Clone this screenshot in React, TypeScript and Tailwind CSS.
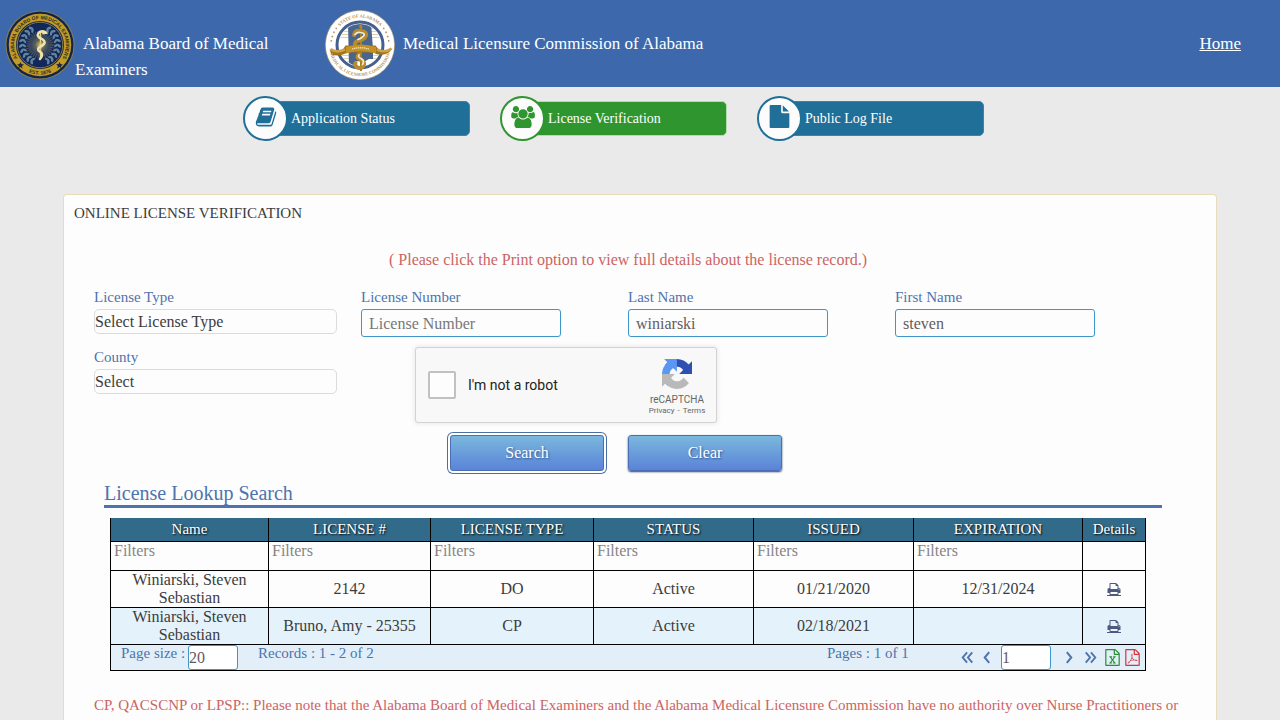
import React, { useState } from "react";

type IconProps = { className?: string };

function BookIcon({ className }: IconProps) {
  return (
    <svg viewBox="0 0 1792 1792" fill="currentColor" aria-hidden="true" className={className}>
      <path d="M1703 478q40 57 18 129l-275 906q-19 64-76.5 107.5t-122.5 43.5h-923q-77 0-148.5-53.5t-99.5-131.5q-24-67-2-127 0-4 3-27t4-37q1-8-3-21.5t-3-19.5q2-11 8-21t16.5-23.5 16.5-23.5q23-38 45-91.5t30-91.5q3-10 .5-30t-.5-28q3-11 17-28t17-23q21-36 42-92t25-90q1-9-2.5-32t.5-28q4-13 22-30.5t22-22.5q19-26 42.5-84.5t27.5-96.5q1-8-3-25.5t-2-26.5q2-8 9-18t18-23 17-21q8-12 16.5-30.5t15-35 16-36 19.5-32 26.5-23.5 36-11.5 47.5 5.5l-1 3q38-9 51-9h761q74 0 114 56t18 130l-274 906q-36 119-71.5 153.5t-128.5 34.5h-869q-27 0-38 15-11 16-1 43 24 70 144 70h923q29 0 56-15.5t35-41.5l300-987q7-22 5-57 38 15 59 43zm-1064 2q-4 13 2 22.5t20 9.5h608q13 0 25.5-9.5t16.5-22.5l21-64q4-13-2-22.5t-20-9.5h-608q-13 0-25.5 9.5t-16.5 22.5zm-83 256q-4 13 2 22.5t20 9.5h608q13 0 25.5-9.5t16.5-22.5l21-64q4-13-2-22.5t-20-9.5h-608q-13 0-25.5 9.5t-16.5 22.5z" />
    </svg>
  );
}

function UsersIcon({ className }: IconProps) {
  return (
    <svg viewBox="-64 0 1920 1792" fill="currentColor" aria-hidden="true" className={className}>
      <path d="M529 896q-162 5-265 128h-134q-82 0-138-40.5t-56-118.5q0-353 124-353 6 0 43.5 21t97.5 42.5 119 21.5q67 0 133-23-5 37-5 66 0 159 93 287zm1071 637q0 120-73 189.5t-194 69.5h-874q-121 0-194-69.5t-73-189.5q0-53 3.5-103.5t14-109 26.5-108.5 43-97.5 62-81 85.5-53.5 111.5-20q10 0 43 21.5t73 48 107 48 135 21.5 135-21.5 107-48 73-48 43-21.5q61 0 111.5 20t85.5 53.5 62 81 43 97.5 26.5 108.5 14 109 3.5 103.5zm-1024-1277q0 106-75 181t-181 75-181-75-75-181 75-181 181-75 181 75 75 181zm704 384q0 159-112.5 271.5t-271.5 112.5-271.5-112.5-112.5-271.5 112.5-271.5 271.5-112.5 271.5 112.5 112.5 271.5zm576 225q0 78-56 118.5t-138 40.5h-134q-103-123-265-128 93-128 93-287 0-29-5-66 66 23 133 23 59 0 119-21.5t97.5-42.5 43.5-21q124 0 124 353zm-128-609q0 106-75 181t-181 75-181-75-75-181 75-181 181-75 181 75 75 181z" />
    </svg>
  );
}

function FileIcon({ className }: IconProps) {
  return (
    <svg viewBox="0 0 1792 1792" fill="currentColor" aria-hidden="true" className={className}>
      <path d="M1152 512v-472q22 14 36 28l408 408q14 14 28 36h-472zm-128 32q0 40 28 68t68 28h544v1056q0 40-28 68t-68 28h-1344q-40 0-68-28t-28-68v-1600q0-40 28-68t68-28h800v544z" />
    </svg>
  );
}

function PrintIcon({ className }: IconProps) {
  return (
    <svg viewBox="64 128 1664 1536" fill="currentColor" aria-hidden="true" className={className}>
      <path d="M448 1536h896v-256h-896v256zm0-640h896v-384h-160q-40 0-68-28t-28-68v-160h-640v640zm1152 64q0-26-19-45t-45-19-45 19-19 45 19 45 45 19 45-19 19-45zm128 0v416q0 13-9.5 22.5t-22.5 9.5h-224v160q0 40-28 68t-68 28h-960q-40 0-68-28t-28-68v-160h-224q-13 0-22.5-9.5t-9.5-22.5v-416q0-79 56.5-135.5t135.5-56.5h64v-544q0-40 28-68t68-28h672q40 0 88 20t76 48l152 152q28 28 48 76t20 88v256h64q79 0 135.5 56.5t56.5 135.5z" />
    </svg>
  );
}

const PAGE_OUTLINE =
  "M1596 380q28 28 48 76t20 88v1152q0 40-28 68t-68 28h-1344q-40 0-68-28t-28-68v-1600q0-40 28-68t68-28h896q40 0 88 20t76 48zm-444-244v376h376q-10-29-22-41l-313-313q-12-12-41-22zm384 1528v-1024h-416q-40 0-68-28t-28-68v-416h-768v1536h1280z";

function ExcelIcon({ className }: IconProps) {
  return (
    <svg viewBox="128 0 1536 1792" fill="currentColor" aria-hidden="true" className={className}>
      <path
        d={
          PAGE_OUTLINE +
          "m-979-234v106h281v-106h-75l103-161q5-7 10-16.5t7.5-13.5 3.5-4h2q1 4 5 10 2 4 4.5 7.5t6 8 6.5 8.5l107 161h-76v106h291v-106h-68l-192-273 195-282h67v-107h-279v107h74l-103 159q-4 7-10 16.5t-9 13.5l-2 3h-2q-1-4-5-10-6-11-17-23l-106-159h76v-107h-290v107h68l189 272-194 283h-68z"
        }
      />
    </svg>
  );
}

function PdfIcon({ className }: IconProps) {
  return (
    <svg viewBox="128 0 1536 1792" fill="currentColor" aria-hidden="true" className={className}>
      <path
        d={
          PAGE_OUTLINE +
          "m-514-593q33 26 84 56 59-7 117-7 147 0 177 49 16 22 2 52 0 1-1 2l-2 2v1q-6 38-71 38-48 0-115-20t-130-53q-221 24-392 83-153 262-242 262-15 0-28-7l-24-12q-1-1-6-5-10-10-6-36 9-40 56-91.5t132-96.5q14-9 23 6 2 2 2 4 52-85 107-197 68-136 104-262-24-82-30.5-159.5t6.5-127.5q11-40 42-40h22q23 0 35 15 18 21 9 68-2 6-4 8 1 3 1 8v30q-2 123-14 192 55 164 146 238zm-576 411q52-24 137-158-51 40-87.5 84t-49.5 74zm398-920q-15 42-2 132 1-7 7-44 0-3 7-43 1-4 4-8-1-1-1-2t-1-2-1-2q-1-22-13-36 0 1-1 2v2zm-124 661q135-54 284-81-2-1-13-9.5t-16-13.5q-76-67-127-176-27 86-83 197-30 56-45 83zm646-16q-24-24-140-24 76 28 124 28 14 0 18-1 0-1-2-3z"
        }
      />
    </svg>
  );
}

function Chevrons({ direction, double }: { direction: "left" | "right"; double?: boolean }) {
  const single = direction === "left" ? "M8 2L3 8L8 14" : "M2 2L7 8L2 14";
  const pair = direction === "left" ? "M7 2L2 8L7 14M13 2L8 8L13 14" : "M2 2L7 8L2 14M8 2L13 8L8 14";
  return (
    <svg
      viewBox={double ? "0 0 15 16" : "0 0 10 16"}
      fill="none"
      stroke="currentColor"
      strokeWidth="2.2"
      aria-hidden="true"
      className={double ? "h-[15px] w-[13px]" : "h-[15px] w-[9px]"}
    >
      <path d={double ? pair : single} />
    </svg>
  );
}

function RecaptchaIcon({ className }: IconProps) {
  return (
    <svg viewBox="0 0 64 64" aria-hidden="true" className={className}>
      <path fill="#2f4fb2" d="M64 31.955l-.033-1.37V4.687l-7.16 7.16C50.948 4.674 42.033.093 32.05.093c-10.4 0-19.622 4.96-25.458 12.64l11.736 11.86a15.55 15.55 0 0 1 4.754-5.334c2.05-1.6 4.952-2.906 8.968-2.906.485 0 .86.057 1.135.163 4.976.393 9.288 3.14 11.828 7.124l-8.307 8.307L64 31.953" />
      <path fill="#5a97f5" d="M31.862.094l-1.37.033H4.594l7.16 7.16C4.58 13.147 0 22.06 0 32.046c0 10.4 4.96 19.622 12.64 25.458L24.5 45.768a15.55 15.55 0 0 1-5.334-4.754c-1.6-2.05-2.906-4.952-2.906-8.968 0-.485.057-.86.163-1.135.393-4.976 3.14-9.288 7.124-11.828l8.307 8.307L31.86.095" />
      <path fill="#b9b9b9" d="M.001 32.045l.033 1.37v25.898l7.16-7.16c5.86 7.173 14.774 11.754 24.76 11.754 10.4 0 19.622-4.96 25.458-12.64l-11.736-11.86a15.55 15.55 0 0 1-4.754 5.334c-2.05 1.6-4.952 2.906-8.968 2.906-.485 0-.86-.057-1.135-.163-4.976-.393-9.288-3.14-11.828-7.124l8.307-8.307c-10.522.04-22.4.066-27.295-.005" />
    </svg>
  );
}

const LAUREL_STEPS = [-62, -46, -30, -14, 2, 18, 34, 50, 64];

function ExaminersSeal({ className }: IconProps) {
  return (
    <svg viewBox="0 0 140 140" role="img" aria-label="Alabama Board of Medical Examiners seal" className={className}>
      <defs>
        <radialGradient id="sealGlow">
          <stop offset="0" stopColor="#e0c25a" />
          <stop offset="0.35" stopColor="#5c6460" />
          <stop offset="1" stopColor="#12275c" />
        </radialGradient>
        <path id="sealTop" d="M34.3 107.8A51.8 51.8 0 1 1 105.7 107.8" />
        <path id="sealBottom" d="M36 118.5A59.3 59.3 0 0 0 104 118.5" />
      </defs>
      <circle cx="70" cy="70" r="69" fill="#857f50" />
      <circle cx="70" cy="70" r="67" fill="#14244a" />
      <circle cx="70" cy="70" r="62.5" fill="#c29a26" />
      <circle cx="70" cy="70" r="48" fill="#14244a" />
      <circle cx="70" cy="70" r="45.5" fill="none" stroke="#a3914c" strokeWidth="1.5" />
      <circle cx="70" cy="70" r="43" fill="#12275c" />
      <circle cx="70" cy="70" r="27" fill="url(#sealGlow)" />
      <circle cx="70" cy="70" r="24" fill="none" stroke="#7d7a55" strokeWidth="9" strokeDasharray="1.5 3" opacity="0.6" />
      {LAUREL_STEPS.map((deg) => (
        <g key={deg} fill="#64869c">
          <ellipse cx="108" cy="70" rx="5" ry="2.6" transform={`rotate(${deg} 70 70) rotate(40 108 70)`} />
          <ellipse cx="102" cy="70" rx="4.5" ry="2.4" transform={`rotate(${deg} 70 70) rotate(-40 102 70)`} />
          <ellipse cx="32" cy="70" rx="5" ry="2.6" transform={`rotate(${-deg} 70 70) rotate(-40 32 70)`} />
          <ellipse cx="38" cy="70" rx="4.5" ry="2.4" transform={`rotate(${-deg} 70 70) rotate(40 38 70)`} />
        </g>
      ))}
      <path d="M71 44V98" stroke="#e2cb7d" strokeWidth="3" />
      <path d="M82 45Q73 40 67 46Q63 53 72 57Q82 62 78 68Q74 72 68 75Q63 80 72 85Q77 90 70 98" fill="none" stroke="#efe3ae" strokeWidth="5" strokeLinecap="round" />
      <path d="M74 42L87 47L75 49Z" fill="#efe3ae" />
      <g fill="#2d2d24" fontFamily="Liberation Sans, sans-serif" fontWeight="700">
        <text fontSize="10" textAnchor="middle">
          <textPath href="#sealTop" startOffset="50%">ALABAMA BOARD OF MEDICAL EXAMINERS</textPath>
        </text>
        <text fontSize="10" textAnchor="middle">
          <textPath href="#sealBottom" startOffset="50%">EST. 1876</textPath>
        </text>
      </g>
      <path d="M31 104l2 4 5 1-4 3 1 5-4-3-5 3 2-5-4-3 5-1zM109 104l2 4 5 1-4 3 1 5-4-3-5 3 2-5-4-3 5-1z" fill="#1d2742" />
    </svg>
  );
}

const DOT_ANGLES = [-172, -163, -154, -145, -35, -26, -17, -8];

function CommissionSeal({ className }: IconProps) {
  return (
    <svg viewBox="0 0 140 140" role="img" aria-label="Medical Licensure Commission of Alabama seal" className={className}>
      <defs>
        <path id="mlcTop" d="M15 70A55 55 0 0 1 125 70" />
        <path id="mlcBottom" d="M8 76A62.3 62.3 0 0 0 132 76" />
        <clipPath id="mlcInner">
          <circle cx="70" cy="70" r="42" />
        </clipPath>
      </defs>
      <circle cx="70" cy="70" r="69" fill="#fff" stroke="#c6a76d" strokeWidth="1.6" strokeDasharray="4 1.5" />
      <circle cx="70" cy="70" r="46" fill="#fff" stroke="#43608e" strokeWidth="6" />
      <g clipPath="url(#mlcInner)">
        <path d="M20 37H120M20 43H120M20 49H120M20 55H120M20 85H120M20 91H120M20 97H120M20 103H120" stroke="#d9c08c" strokeWidth="1.5" />
        <path d="M46 26H92L96 78V102H60V112H48Z" fill="#48658f" />
        <path d="M88 98H112V108H70Z" fill="#fff" />
      </g>
      {DOT_ANGLES.map((deg) => (
        <circle key={deg} cx="128" cy="70" r="1.8" fill="#b69357" transform={`rotate(${deg} 70 70)`} />
      ))}
      <path d="M72 30V122" stroke="#a87d20" strokeWidth="4" />
      <path d="M70 28l5 6-3 4-4-4z" fill="#b8871f" />
      <path d="M58 50Q60 40 70 42Q84 43 82 51Q79 59 68 61Q57 64 61 71M69 87Q60 94 70 99Q82 104 77 112Q73 117 68 116Q58 113 61 106" fill="none" stroke="#b78a2d" strokeWidth="8" strokeLinecap="round" />
      <path d="M60 49Q64 44 71 45Q80 46 78 51Q73 57 66 59M68 90Q65 94 72 97Q80 101 75 109" fill="none" stroke="#f3ead2" strokeWidth="3.5" strokeLinecap="round" />
      <path d="M9 79Q22 86 35 80L41 71H101L108 80Q121 86 135 77L128 85Q112 94 96 85H46Q28 94 13 89Z" fill="#a27417" />
      <path d="M42 74Q70 64 102 74V87Q70 78 42 87Z" fill="#c59225" />
      <path d="M11 78Q23 87 40 79M104 79Q121 87 133 77" fill="none" stroke="#cba24b" strokeWidth="5" />
      <path d="M54 78Q70 73 88 78" fill="none" stroke="#f3dfaa" strokeWidth="2.5" strokeDasharray="3 1" />
      <g fill="#b69357" fontFamily="Liberation Serif, serif" fontWeight="700">
        <text fontSize="9" textAnchor="middle">
          <textPath href="#mlcTop" startOffset="50%">STATE OF ALABAMA</textPath>
        </text>
        <text fontSize="9" textAnchor="middle">
          <textPath href="#mlcBottom" startOffset="50%">MEDICAL LICENSURE COMMISSION</textPath>
        </text>
      </g>
    </svg>
  );
}

type NavItemProps = { label: string; icon: React.ReactNode; active?: boolean };

function NavItem({ label, icon, active }: NavItemProps) {
  return (
    <a href="#" className="relative flex h-[45px] w-[227px] items-center text-sm text-white">
      <span
        className={
          active
            ? "ml-[22px] flex h-[35px] flex-1 items-center rounded-[5px] border border-[#b3dcb0] bg-[#2f952f] pl-[25px]"
            : "ml-[22px] flex h-[35px] flex-1 items-center rounded-[5px] border border-[#2289cd] bg-[#1f6f99] pl-[25px]"
        }
      >
        {label}
      </span>
      <span
        className={
          active
            ? "absolute top-0 left-0 flex size-[45px] items-center justify-center rounded-full border-2 border-[#2f952f] bg-[#fcfcfc] pb-1 text-[#2f952f]"
            : "absolute top-0 left-0 flex size-[45px] items-center justify-center rounded-full border-2 border-[#1f6f99] bg-[#fcfcfc] pb-1 text-[#1f6f99]"
        }
      >
        {icon}
      </span>
    </a>
  );
}

const LABEL = "block text-[15px] leading-6 text-[#4e73ad]";
const SELECT =
  "block h-[25px] w-[243px] appearance-none rounded-[5px] border border-[#dcdcdc] bg-[#fdfdfd] text-base leading-[22px] text-[#3c3c3c]";
const INPUT =
  "block h-7 w-[200px] rounded-[3px] border border-[#3d97c9] bg-[#fdfdfd] px-[7px] pt-px text-base leading-6 text-[#645b5b] placeholder:text-[#777777]";
const BUTTON =
  "h-9 w-[154px] rounded-[3px] border border-[#4a6fb5] bg-linear-to-b from-[#7bb7dd] to-[#5b83d7] text-base text-white [text-shadow:1px_1px_2px_#35548a]";

type Row = { name: string; license: string; type: string; status: string; issued: string; expiration: string };

const ROWS: Row[] = [
  { name: "Winiarski, Steven Sebastian", license: "2142", type: "DO", status: "Active", issued: "01/21/2020", expiration: "12/31/2024" },
  { name: "Winiarski, Steven Sebastian", license: "Bruno, Amy - 25355", type: "CP", status: "Active", issued: "02/18/2021", expiration: "" },
];

const COLUMNS = ["Name", "LICENSE #", "LICENSE TYPE", "STATUS", "ISSUED", "EXPIRATION"];

export default function App() {
  const [license, setLicense] = useState("");
  const [lastName, setLastName] = useState("winiarski");
  const [firstName, setFirstName] = useState("steven");

  const clear = () => {
    setLicense("");
    setLastName("");
    setFirstName("");
  };

  return (
    <div className="flex min-h-screen flex-col bg-[#eaeaea] font-['Liberation_Serif',serif] text-[#3c3c3c]">
      <header className="flex items-start bg-[#3d69ac] px-[5px] pt-[10px] pb-1 text-[17px] leading-[26px] text-white">
        <div className="flex w-[320px] items-start">
          <ExaminersSeal className="size-[70px] shrink-0" />
          <p className="w-[210px] pt-[21px] indent-2">Alabama Board of Medical Examiners</p>
        </div>
        <div className="flex flex-1 items-start">
          <CommissionSeal className="size-[70px] shrink-0" />
          <p className="pt-[21px] pl-2">Medical Licensure Commission of Alabama</p>
        </div>
        <a href="#" className="mt-[21px] mr-[34px] underline">Home</a>
      </header>

      <nav aria-label="Services" className="flex justify-center gap-[30px] pt-[9px] pr-[53px]">
        <NavItem label="Application Status" icon={<BookIcon className="size-[22px]" />} />
        <NavItem label="License Verification" active icon={<UsersIcon className="h-[22px] w-6" />} />
        <NavItem label="Public Log File" icon={<FileIcon className="size-[23px]" />} />
      </nav>

      <main className="mx-[63px] mt-[53px] flex-1 rounded-t border border-b-0 border-[#e8dcba] bg-[#fdfdfd]">
        <h1 className="pt-2 pl-[10px] text-[15px] leading-5">ONLINE LICENSE VERIFICATION</h1>
        <div className="mr-[54px] ml-[30px]">
          <p className="pt-[25px] text-center text-base leading-6 text-[#cb6464]">
            ( Please click the Print option to view full details about the license record.)
          </p>

          <form onSubmit={(e) => e.preventDefault()} className="pt-[13px]">
            <div className="grid grid-cols-4">
              <div>
                <label htmlFor="licenseType" className={LABEL}>License Type</label>
                <select id="licenseType" className={SELECT}>
                  <option>Select License Type</option>
                </select>
              </div>
              <div>
                <label htmlFor="licenseNumber" className={LABEL}>License Number</label>
                <input id="licenseNumber" placeholder="License Number" value={license} onChange={(e) => setLicense(e.target.value)} className={INPUT} />
              </div>
              <div>
                <label htmlFor="lastName" className={LABEL}>Last Name</label>
                <input id="lastName" value={lastName} onChange={(e) => setLastName(e.target.value)} className={INPUT} />
              </div>
              <div>
                <label htmlFor="firstName" className={LABEL}>First Name</label>
                <input id="firstName" value={firstName} onChange={(e) => setFirstName(e.target.value)} className={INPUT} />
              </div>
            </div>

            <div className="grid grid-cols-4 pt-2">
              <div>
                <label htmlFor="county" className={LABEL}>County</label>
                <select id="county" className={SELECT}>
                  <option>Select</option>
                </select>
              </div>
              <div className="col-span-2 pt-[2px] pl-[54px]">
                <div className="flex h-[76px] w-[302px] items-center rounded-[3px] border border-[#d3d3d3] bg-[#f8f8f8] pl-3 font-[Roboto,sans-serif] shadow-[0_0_4px_1px_rgba(0,0,0,0.08)]">
                  <input id="robot" type="checkbox" className="size-7 appearance-none rounded-[2px] border-2 border-[#c1c1c1] bg-[#fdfdfd]" />
                  <label htmlFor="robot" className="flex-1 pl-3 text-sm text-[#222222]">I&apos;m not a robot</label>
                  <div className="flex w-[78px] flex-col items-center pt-[5px] text-[#666666]">
                    <RecaptchaIcon className="size-[30px]" />
                    <span className="pt-[5px] text-[10px] leading-3">reCAPTCHA</span>
                    <span className="flex gap-[3px] text-[8px] leading-[10px]">
                      <a href="#">Privacy</a>
                      <span>-</span>
                      <a href="#">Terms</a>
                    </span>
                  </div>
                </div>
              </div>
            </div>

            <div className="flex justify-center gap-6 pt-3 pr-6">
              <button type="submit" className={`${BUTTON} shadow-[0_0_0_2px_#ffffff,0_0_0_3px_#4a6fa5]`}>Search</button>
              <button type="button" onClick={clear} className={`${BUTTON} shadow-[0_1px_2px_#33415f]`}>Clear</button>
            </div>
          </form>

          <section className="pt-[10px]">
            <h2 className="ml-[10px] border-b-3 border-[#4e73ad] text-xl leading-6 text-[#4e73ad]">License Lookup Search</h2>
            <div className="pt-[10px] pr-4 pl-4">
              <table className="w-full table-fixed border-separate border-spacing-0 border-l border-black">
                <colgroup>
                  <col className="w-[158px]" />
                  <col className="w-[162px]" />
                  <col className="w-[163px]" />
                  <col className="w-[160px]" />
                  <col className="w-[160px]" />
                  <col className="w-[169px]" />
                  <col className="w-[63px]" />
                </colgroup>
                <thead>
                  <tr className="h-6">
                    {[...COLUMNS, "Details"].map((c) => (
                      <th key={c} scope="col" className="border-r border-b border-black bg-[#326b8a] p-0 pb-[2px] text-[15px] leading-5 font-normal text-white [text-shadow:1px_1px_2px_#000000]">
                        {c}
                      </th>
                    ))}
                  </tr>
                  <tr className="h-[29px]">
                    {COLUMNS.map((c) => (
                      <td key={c} className="border-r border-b border-black p-0 align-top">
                        <input aria-label={`Filter ${c}`} placeholder="Filters" className="block h-[18px] w-full bg-transparent px-[3px] text-base leading-[18px] placeholder:text-[#858585]" />
                      </td>
                    ))}
                    <td className="border-r border-b border-black p-0" />
                  </tr>
                </thead>
                <tbody>
                  {ROWS.map((row) => (
                    <tr key={row.license} className="h-[37px] text-center text-base leading-[18px] even:bg-[#e4f3fb]">
                      <td className="border-r border-b border-black px-4 py-0">{row.name}</td>
                      <td className="border-r border-b border-black p-0">{row.license}</td>
                      <td className="border-r border-b border-black p-0">{row.type}</td>
                      <td className="border-r border-b border-black p-0">{row.status}</td>
                      <td className="border-r border-b border-black p-0">{row.issued}</td>
                      <td className="border-r border-b border-black p-0">{row.expiration}</td>
                      <td className="border-r border-b border-black p-0">
                        <a href="#" aria-label={`Print ${row.license}`} className="mx-auto block w-[14px] border-b border-[#4d5a80] text-[#4d5a80]">
                          <PrintIcon className="h-3 w-[14px]" />
                        </a>
                      </td>
                    </tr>
                  ))}
                </tbody>
                <tfoot>
                  <tr>
                    <td colSpan={7} className="border-r border-b border-black bg-[#e2eff8] p-0">
                      <div className="flex h-[25px] items-start pl-[10px] text-[15px] leading-4 text-[#4e73ad]">
                        <label htmlFor="pageSize" className="w-[67px]">Page size :</label>
                        <input id="pageSize" defaultValue="20" className="h-[25px] w-[50px] rounded-[3px] border border-[#3d97c9] bg-white text-base text-[#645b5b]" />
                        <span className="pl-5">Records : 1 - 2 of 2</span>
                        <span className="ml-auto w-[134px]">Pages : 1 of 1</span>
                        <div className="flex h-[25px] items-center pr-[5px]">
                          <button type="button" aria-label="First page"><Chevrons direction="left" double /></button>
                          <button type="button" aria-label="Previous page" className="pl-2"><Chevrons direction="left" /></button>
                          <input aria-label="Page" defaultValue="1" className="ml-[10px] h-[25px] w-[50px] rounded-[3px] border border-[#3d97c9] bg-white text-base text-[#645b5b]" />
                          <button type="button" aria-label="Next page" className="pl-[14px]"><Chevrons direction="right" /></button>
                          <button type="button" aria-label="Last page" className="pl-[10px]"><Chevrons direction="right" double /></button>
                          <button type="button" aria-label="Export to Excel" className="pl-2 text-[#2a8f35]"><ExcelIcon className="h-[17px] w-[15px]" /></button>
                          <button type="button" aria-label="Export to PDF" className="pl-[5px] text-[#d63340]"><PdfIcon className="h-[17px] w-[15px]" /></button>
                        </div>
                      </div>
                    </td>
                  </tr>
                </tfoot>
              </table>
            </div>
          </section>
        </div>
        <p className="pt-[23px] pl-[30px] text-[15px] leading-[22px] text-[#cb6464]">
          CP, QACSCNP or LPSP:: Please note that the Alabama Board of Medical Examiners and the Alabama Medical Licensure Commission have no authority over Nurse Practitioners or
        </p>
      </main>
    </div>
  );
}
